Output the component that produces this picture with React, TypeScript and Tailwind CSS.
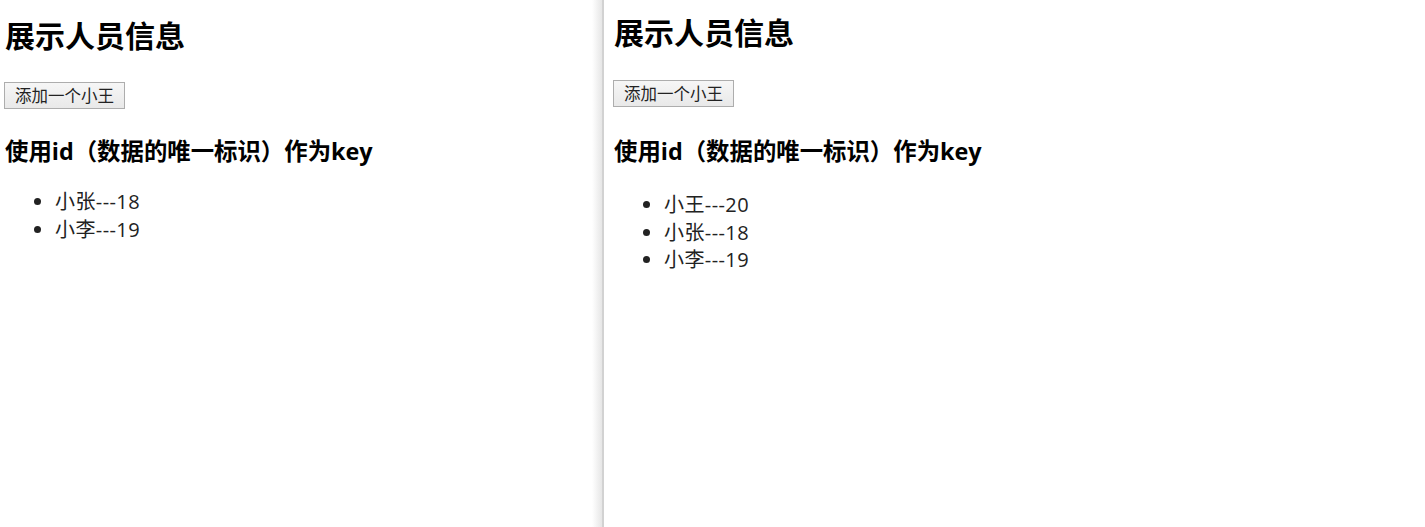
const font = "font-['Open_Sans','Microsoft_YaHei','Noto_Sans_CJK_SC',sans-serif]"

interface Person {
  id: string
  name: string
  age: number
}

interface PanelProps {
  persons: Person[]
  className: string
  h2Top: string
  btnTop: string
  h3Top: string
  listTop: string
}

function Panel({ persons, className, h2Top, btnTop, h3Top, listTop }: PanelProps) {
  return (
    <div className={`flex flex-col items-start ${className}`}>
      <h2 className={`${h2Top} text-[30px] leading-[40px] font-bold text-black`}>展示人员信息</h2>
      <button
        className={`${btnTop} h-[27px] px-[10px] border border-[#adadad] bg-gradient-to-b from-[#f6f6f6] to-[#e9e9e9] text-[16.5px] leading-[25px] text-[#222] -ml-px`}
      >
        添加一个小王
      </button>
      <h3 className={`${h3Top} text-[23.4px] leading-[31px] font-bold text-black`}>
        使用id（数据的唯一标识）作为key
      </h3>
      <ul className={`${listTop} list-disc pl-[50px] text-[20px] leading-[27.5px] tracking-[0.4px] text-[#222]`}>
        {persons.map((p) => (
          <li key={p.id}>
            {p.name}---{p.age}
          </li>
        ))}
      </ul>
    </div>
  )
}

export default function App() {
  const before: Person[] = [
    { id: '001', name: '小张', age: 18 },
    { id: '002', name: '小李', age: 19 },
  ]
  const after: Person[] = [{ id: '003', name: '小王', age: 20 }, ...before]

  return (
    <div className={`flex h-[527px] w-[1425px] bg-white ${font}`}>
      <Panel
        persons={before}
        className="w-[592px] pl-[5px]"
        h2Top="mt-[16px]"
        btnTop="mt-[26px]"
        h3Top="mt-[27px]"
        listTop="mt-[21px]"
      />
      <div className="w-[12px] h-full bg-gradient-to-r from-white to-[#e6e6e6] border-r-2 border-[#d2d2d2]" />
      <Panel
        persons={after}
        className="flex-1 pl-[10px]"
        h2Top="mt-[13px]"
        btnTop="mt-[27px]"
        h3Top="mt-[29px]"
        listTop="mt-[24px]"
      />
    </div>
  )
}
